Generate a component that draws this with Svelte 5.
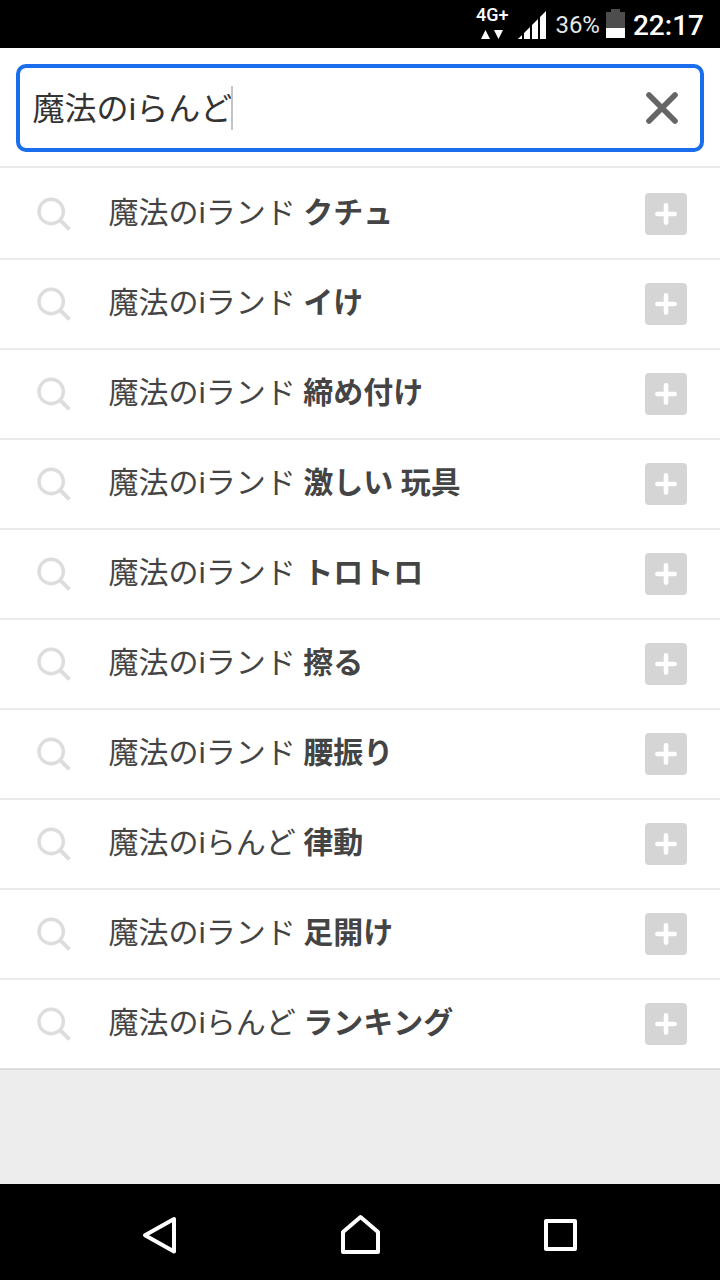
<script>
  let query = '魔法のiらんど';

  const suggestions = [
    { base: '魔法のiランド', extra: 'クチュ' },
    { base: '魔法のiランド', extra: 'イけ' },
    { base: '魔法のiランド', extra: '締め付け' },
    { base: '魔法のiランド', extra: '激しい 玩具' },
    { base: '魔法のiランド', extra: 'トロトロ' },
    { base: '魔法のiランド', extra: '擦る' },
    { base: '魔法のiランド', extra: '腰振り' },
    { base: '魔法のiらんど', extra: '律動' },
    { base: '魔法のiランド', extra: '足開け' },
    { base: '魔法のiらんど', extra: 'ランキング' }
  ];
</script>

<div class="screen">
  <div class="status-bar">
    <div class="network">
      <span>4G+</span>
      <svg width="22" height="9" viewBox="0 0 22 9">
        <path d="M0 9 L4.5 0 L9 9 Z M13 0 H22 L17.5 9 Z" fill="#fff" />
      </svg>
    </div>
    <svg class="signal" width="28" height="28" viewBox="0 0 28 28">
      <path d="M0 28 L4 24 V28 Z M6 28 V22 L12 16 V28 Z M14 28 V14 L20 8 V28 Z M22 28 V6 L28 0 V28 Z" fill="#fff" />
    </svg>
    <span class="percent">36%</span>
    <svg class="battery" width="19" height="29" viewBox="0 0 19 29">
      <path d="M0 3 H5 V0 H14 V3 H19 V19 H0 Z" fill="#4d4d4d" />
      <rect y="19" width="19" height="10" fill="#fff" />
    </svg>
    <span class="clock">22:17</span>
  </div>

  <header>
    <div class="search-box">
      <span class="query">{query}</span>
      <span class="caret"></span>
      <button class="clear" aria-label="Clear">
        <svg width="32" height="32" viewBox="0 0 32 32">
          <path d="M3 3 L29 29 M29 3 L3 29" stroke="#666" stroke-width="5.6" stroke-linecap="round" />
        </svg>
      </button>
    </div>
  </header>

  <ul>
    {#each suggestions as item}
      <li>
        <svg class="lens" width="34" height="34" viewBox="0 0 34 34">
          <circle cx="14.2" cy="14.5" r="12.2" fill="none" stroke="#ddd" stroke-width="3.4" />
          <path d="M23 23 L32.4 32.4" stroke="#ddd" stroke-width="4" />
        </svg>
        <span class="text">{item.base} <b>{item.extra}</b></span>
        <button class="add" aria-label="Add">
          <svg width="22" height="22" viewBox="0 0 22 22">
            <path d="M11 2.4 V19.6 M2.4 11 H19.6" stroke="#fff" stroke-width="4.6" stroke-linecap="round" />
          </svg>
        </button>
      </li>
    {/each}
  </ul>

  <nav>
    <svg width="36" height="40" viewBox="0 0 36 40">
      <path d="M32 4 V36.5 L3 20.3 Z" />
    </svg>
    <svg width="42" height="42" viewBox="0 0 42 42">
      <path d="M4 38 V18 L21.5 3 L39 18 V38 Z" />
    </svg>
    <svg width="36" height="36" viewBox="0 0 36 36">
      <path d="M4 4 H33 V32 H4 Z" />
    </svg>
  </nav>
</div>

<style>
  :global(body) {
    margin: 0;
  }

  .screen {
    display: flex;
    flex-direction: column;
    width: 720px;
    height: 1280px;
    background: #ededed;
    font-family: Roboto, 'Noto Sans CJK JP', sans-serif;
    font-kerning: none;
    overflow: hidden;
  }

  svg {
    display: block;
    flex: none;
  }

  button {
    border: 0;
    padding: 0;
    background: none;
  }

  /* Status bar */
  .status-bar {
    display: flex;
    justify-content: flex-end;
    height: 48px;
    padding-right: 16px;
    box-sizing: border-box;
    background: #000;
    color: #fff;
  }

  .network {
    display: flex;
    flex-direction: column;
    align-items: center;
    padding-top: 5px;
    margin-right: 10px;
    font-size: 18px;
    font-weight: 500;
    line-height: 20px;
  }

  .network svg {
    margin-top: 5px;
  }

  .signal {
    margin: 11px 9px 0 0;
  }

  .percent {
    margin-right: 6px;
    font-size: 24px;
    line-height: 50px;
    color: #e6e6e6;
  }

  .battery {
    margin: 9px 8px 0 0;
  }

  .clock {
    font-size: 28px;
    font-weight: 500;
    line-height: 52px;
  }

  /* Search field */
  header {
    height: 120px;
    padding: 16px 16px 14px;
    box-sizing: border-box;
    background: #fff;
    border-bottom: 2px solid #ebebeb;
  }

  .search-box {
    display: flex;
    align-items: center;
    height: 88px;
    padding: 0 22px 0 12.5px;
    box-sizing: border-box;
    border: 4px solid #1a6dec;
    border-radius: 10px;
  }

  .query {
    padding-top: 2px;
    font-size: 32px;
    line-height: 44px;
    color: #333;
  }

  .caret {
    width: 2px;
    height: 44px;
    margin-left: -1px;
    background: #c4c4c4;
  }

  .clear {
    margin-left: auto;
  }

  /* Suggestions */
  ul {
    margin: 0;
    padding: 2px 0 0;
    list-style: none;
    background: #fff;
  }

  li {
    display: flex;
    align-items: center;
    height: 90px;
    padding: 0 33px 0 37px;
    box-sizing: border-box;
    border-bottom: 2px solid #ebebeb;
  }

  li:last-child {
    border-bottom-color: #dcdcdc;
  }

  .text {
    margin-left: 37.5px;
    padding-bottom: 2px;
    font-size: 30px;
    line-height: 44px;
    color: #444;
    white-space: pre;
  }

  .add {
    display: flex;
    align-items: center;
    justify-content: center;
    width: 42px;
    height: 42px;
    margin-left: auto;
    background: #d5d5d5;
    border-radius: 4px;
  }

  /* Android navigation keys */
  nav {
    display: flex;
    align-items: center;
    justify-content: space-between;
    height: 96px;
    margin-top: auto;
    padding: 6px 142px 0;
    box-sizing: border-box;
    background: #000;
  }

  nav path {
    fill: none;
    stroke: #fff;
    stroke-width: 4;
    stroke-linejoin: round;
  }
</style>
